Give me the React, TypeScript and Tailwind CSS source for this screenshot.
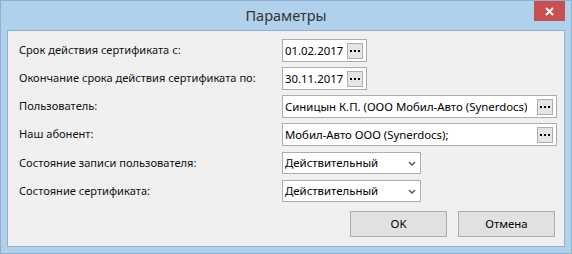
import React from 'react';

const font = { fontFamily: '"Noto Sans", "Open Sans", sans-serif' };

function DotsButton() {
  return (
    <div className="flex h-[16px] w-[16px] shrink-0 items-center justify-center border border-[#adadad] bg-[#e5e5e5]">
      <svg width="10" height="2" viewBox="0 0 10 2">
        <rect x="0" y="0" width="2" height="2" fill="#000" />
        <rect x="4" y="0" width="2" height="2" fill="#000" />
        <rect x="8" y="0" width="2" height="2" fill="#000" />
      </svg>
    </div>
  );
}

function PickerField({ value, width }: { value: string; width: string }) {
  return (
    <div className={`flex h-[23px] ${width} items-center justify-between border border-[#abadb3] bg-white pl-[2px] pr-[3px]`}>
      <span className="overflow-hidden whitespace-nowrap text-[11.4px] text-black">{value}</span>
      <DotsButton />
    </div>
  );
}

function SelectField({ value }: { value: string }) {
  return (
    <div className="flex h-[22px] w-[139px] items-center justify-between border border-[#abadb3] bg-white pl-[2px] pr-[4px]">
      <span className="text-[11.4px] text-black">{value}</span>
      <svg width="8" height="5" viewBox="0 0 8 5">
        <path d="M1 1 L4 4 L7 1" fill="none" stroke="#666" strokeWidth="1.7" />
      </svg>
    </div>
  );
}

const rows: { label: string; field: React.ReactNode }[] = [
  { label: 'Срок действия сертификата с:', field: <PickerField value="01.02.2017" width="w-[85px]" /> },
  { label: 'Окончание срока действия сертификата по:', field: <PickerField value="30.11.2017" width="w-[85px]" /> },
  { label: 'Пользователь:', field: <PickerField value="Синицын К.П. (ООО Мобил-Авто (Synerdocs)" width="w-[275px]" /> },
  { label: 'Наш абонент:', field: <PickerField value="Мобил-Авто ООО (Synerdocs);" width="w-[275px]" /> },
  { label: 'Состояние записи пользователя:', field: <SelectField value="Действительный" /> },
  { label: 'Состояние сертификата:', field: <SelectField value="Действительный" /> },
];

export default function App() {
  return (
    <div style={font} className="flex h-[254px] w-[572px] flex-col border border-[#8fb0cf] bg-[#afd1ec]">
      <div className="relative flex h-[29px] shrink-0 items-center justify-center">
        <span className="text-[14.5px] text-[#333]">Параметры</span>
        <div className="absolute right-[6px] top-0 flex h-[20px] w-[31px] items-center justify-center bg-[#c75050]">
          <svg width="9" height="9" viewBox="0 0 9 9">
            <path d="M1 1 L8 8 M8 1 L1 8" stroke="#fff" strokeWidth="2" />
          </svg>
        </div>
      </div>
      <div className="mx-[6px] flex h-[217px] flex-col border border-[#93b1cd] bg-[#f0f0f0] pl-[11px] pt-[8px]">
        <div className="flex flex-col gap-[5px]">
          {rows.map((r, i) => (
            <div key={i} className={`flex items-center ${i >= 4 ? 'mt-[1px]' : ''}`}>
              <span className="w-[263px] text-[11.1px] text-[#111]">{r.label}</span>
              {r.field}
            </div>
          ))}
        </div>
        <div className="mt-[9px] flex justify-end gap-[11px] pr-[9px]">
          <div className="flex h-[26px] w-[97px] items-center justify-center border border-[#adadad] bg-[#e1e1e1] text-[11.4px] text-black">
            OK
          </div>
          <div className="flex h-[26px] w-[97px] items-center justify-center border border-[#adadad] bg-[#e1e1e1] text-[11.4px] text-black">
            Отмена
          </div>
        </div>
      </div>
    </div>
  );
}
